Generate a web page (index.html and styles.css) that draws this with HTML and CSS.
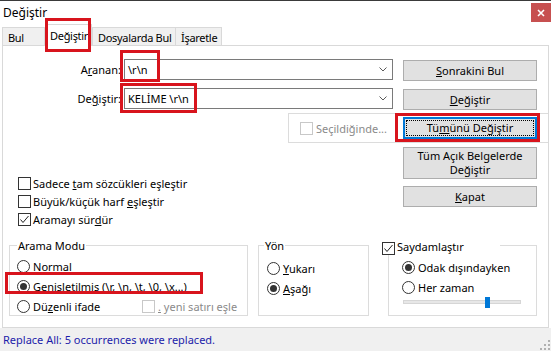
FILE: index.html
```html
<!DOCTYPE html>
<html lang="tr">
<head>
<meta charset="utf-8">
<title>Değiştir</title>
<link rel="stylesheet" href="styles.css">
</head>
<body>
<div class="window">
  <div class="titlebar">
    <span class="title">Değiştir</span>
    <span class="close"><svg width="8" height="8" viewBox="0 0 8 8"><path d="M1 1L7 7M7 1L1 7" stroke="#fff" stroke-width="1.6" fill="none"/></svg></span>
  </div>

  <div class="tabs">
    <div class="tab tab-bul">Bul</div>
    <div class="tab tab-deg active">Değiştir</div>
    <div class="tab tab-dos">Dosyalarda Bul</div>
    <div class="tab tab-isa">İşaretle</div>
  </div>

  <div class="panel">
    <div class="row row-find">
      <div class="lbl">A<u>r</u>anan:</div>
      <div class="combo"><span>\r\n</span><svg class="chev" width="8" height="5" viewBox="0 0 8 5"><path d="M0.5 0.5L4 4L7.5 0.5" stroke="#5a5a5a" fill="none"/></svg></div>
      <div class="btn"><span><u>S</u>onrakini Bul</span></div>
    </div>
    <div class="row row-rep">
      <div class="lbl">De<u>ğ</u>iştir:</div>
      <div class="combo"><span>KELİME \r\n</span><svg class="chev" width="8" height="5" viewBox="0 0 8 5"><path d="M0.5 0.5L4 4L7.5 0.5" stroke="#5a5a5a" fill="none"/></svg></div>
      <div class="btn"><span><u>D</u>eğiştir</span></div>
    </div>

    <div class="selbox">
      <div class="selchk"><span class="cb dis"></span><span>Seçildiğinde...</span></div>
      <div class="btn focus"><span>Tü<u>m</u>ünü Değiştir</span></div>
    </div>

    <div class="mid">
      <div class="checks">
        <div class="chk-row"><span class="cb"></span><span>Sadece <u>t</u>am sözcükleri eşleştir</span></div>
        <div class="chk-row"><span class="cb"></span><span>Büyük/küçük harf <u>e</u>şleştir</span></div>
        <div class="chk-row"><span class="cb"><svg width="11" height="11" viewBox="0 0 11 11"><path d="M1.5 5.5L4 8.5L9.5 2" stroke="#222" fill="none"/></svg></span><span>Aramayı sür<u>d</u>ür</span></div>
      </div>
      <div class="rbtns">
        <div class="btn tall"><span>Tüm Açık Belgelerde<br>Değiştir</span></div>
        <div class="btn kapat"><span><u>K</u>apat</span></div>
      </div>
    </div>

    <div class="groups">
      <fieldset class="grp g-mode">
        <legend>Arama Modu</legend>
        <div class="gbody">
          <div class="rad-row"><span class="rd"></span><span><u>N</u>ormal</span></div>
          <div class="rad-row"><span class="rd on"></span><span><u>G</u>enişletilmiş (\r, \n, \t, \0, \x...)</span></div>
          <div class="rad-row"><div class="rad-main"><span class="rd"></span><span>Dü<u>z</u>enli ifade</span></div><span class="cb dis"></span><span class="distxt"><u>.</u> yeni satırı eşle</span></div>
        </div>
      </fieldset>
      <fieldset class="grp g-dir">
        <legend>Yön</legend>
        <div class="gbody">
          <div class="rad-row"><span class="rd"></span><span><u>Y</u>ukarı</span></div>
          <div class="rad-row"><span class="rd on"></span><span><u>A</u>şağı</span></div>
        </div>
      </fieldset>
      <fieldset class="grp g-tr">
        <legend><span class="cb"><svg width="11" height="11" viewBox="0 0 11 11"><path d="M1.5 5.5L4 8.5L9.5 2" stroke="#222" fill="none"/></svg></span><span class="ltxt">Saydamlaştır</span></legend>
        <div class="gbody">
          <div class="rad-row"><span class="rd on"></span><span>Odak dışındayken</span></div>
          <div class="rad-row"><span class="rd"></span><span>Her zaman</span></div>
          <div class="slider"><span class="track"></span><span class="thumb"></span></div>
        </div>
      </fieldset>
    </div>
  </div>

  <div class="status">
    <span>Replace All: 5 occurrences were replaced.</span>
    <svg class="grip" width="10" height="10" viewBox="0 0 10 10"><g fill="#b0b0b0"><rect x="8" y="0" width="2" height="2"/><rect x="4" y="4" width="2" height="2"/><rect x="8" y="4" width="2" height="2"/><rect x="0" y="8" width="2" height="2"/><rect x="4" y="8" width="2" height="2"/><rect x="8" y="8" width="2" height="2"/></g></svg>
  </div>

  <div class="mark m-tab"></div>
  <div class="mark m-find"></div>
  <div class="mark m-rep"></div>
  <div class="mark m-all"></div>
  <div class="mark m-ext"></div>
</div>
</body>
</html>
```
FILE: styles.css
```css
* { box-sizing: border-box; }
html, body { margin: 0; padding: 0; }
body {
  width: 551px; height: 351px; overflow: hidden; background: #fff;
  font-family: "Noto Sans", "Open Sans", sans-serif; font-size: 11px; color: #000;
}
u { text-underline-offset: 1px; }

.window { position: relative; width: 551px; height: 351px; display: flex; flex-direction: column; background: #fff; }

/* title bar */
.titlebar { height: 24px; flex: none; border-top: 1px solid #3a3a3a; display: flex; justify-content: space-between; align-items: flex-start; }
.title { font-size: 12px; line-height: 16px; margin: 4px 0 0 3px; }
.close { width: 20px; height: 19px; margin-top: 2px; background: #c75050; display: flex; align-items: center; justify-content: center; }

/* tabs */
.tabs { height: 21px; flex: none; display: flex; align-items: flex-end; padding-left: 2px; position: relative; z-index: 1; }
.tab { height: 18px; border: 1px solid #d9d9d9; border-bottom: none; background: #f0f0f0; padding: 2px 0 0 5px; line-height: 15px; white-space: nowrap; letter-spacing: -0.3px; }
.tab-bul { width: 43px; }
.tab-deg { width: 47px; }
.tab-dos { width: 84px; }
.tab-isa { width: 46px; border-left: none; }
.tab.active { height: 22px; background: #fff; margin-bottom: -1px; padding: 2px 0 0 4px; line-height: 17px; }

/* panel */
.panel { flex: none; margin-left: 2px; width: 547px; height: 283px; border: 1px solid #d9d9d9; background: #fff; }

.row { display: flex; align-items: flex-start; }
.row-find { margin-top: 13px; }
.row-rep { margin-top: 7px; }
.lbl { width: 118px; margin-right: 3px; text-align: right; line-height: 21px; white-space: nowrap; }
.combo { width: 269px; height: 21px; margin-right: 10px; border: 1px solid #7a7a7a; background: #fff; display: flex; align-items: center; justify-content: space-between; padding: 0 5px 0 3px; white-space: nowrap; }
.chev { flex: none; }

.btn { width: 134px; height: 21px; margin-top: 1px; border: 1px solid #adadad; background: #e1e1e1; display: flex; align-items: center; justify-content: center; text-align: center; line-height: 14px; white-space: nowrap; flex: none; }
.btn.focus { height: 22px; margin-top: 0; border: 2px solid #0078d7; position: relative; }
.btn.focus::before { content: ""; position: absolute; left: 1px; top: 1px; right: 1px; bottom: 1px; border: 1px dotted #000; }

/* selection box */
.selbox { margin: 3px 0 0 285px; height: 30px; border: 1px solid #dcdcdc; border-right: none; display: flex; align-items: center; }
.selchk { width: 114px; padding-left: 11px; display: flex; align-items: center; color: #8a8a8a; white-space: nowrap; }
.selchk .cb { margin: 0 3px 0 0; }

/* checkboxes / radios */
.cb { width: 13px; height: 13px; border: 1px solid #333; background: #fff; flex: none; display: block; }
.cb svg { display: block; }
.cb.dis { border-color: #c8c8c8; }
.rd { width: 13px; height: 13px; border: 1px solid #333; border-radius: 50%; background: #fff; flex: none; display: flex; align-items: center; justify-content: center; }
.rd.on::after { content: ""; width: 7px; height: 7px; border-radius: 50%; background: #333; }

.mid { display: flex; }
.checks { width: 400px; padding: 32px 0 0 15px; }
.chk-row { display: flex; align-items: flex-start; height: 18px; line-height: 18px; white-space: nowrap; }
.chk-row .cb { margin: 2px 2px 0 0; }
.rbtns { width: 134px; display: flex; flex-direction: column; }
.rbtns .btn.tall { height: 32px; margin-top: 4px; white-space: normal; }
.rbtns .btn.kapat { margin-top: 7px; }

/* group boxes */
.groups { display: flex; align-items: flex-start; margin-top: 7px; padding-left: 6px; }
.grp { margin: 0; padding: 0; border: 1px solid #dcdcdc; height: 80px; min-width: 0; }
.grp legend { padding: 0 1px; height: 19px; line-height: 19px; white-space: nowrap; }
.g-mode { width: 239px; }
.g-mode legend { margin-left: 7px; }
.g-dir { width: 111px; margin-left: 10px; }
.g-dir legend { margin-left: 5px; }
.g-tr { width: 149px; margin-left: 19px; }
.g-tr legend { margin-left: -7px; width: 118px; padding: 0; background: #fff; display: flex; align-items: flex-start; }
.g-tr legend .cb { margin: 6px 2px 0 0; }
.g-tr .ltxt { line-height: 15px; margin-top: 3px; }

.gbody { display: flex; flex-direction: column; }
.g-mode .gbody { padding: 2px 0 0 7px; }
.g-dir .gbody { padding: 4px 0 0 8px; }
.g-tr .gbody { padding: 3px 0 0 13px; }
.rad-row { display: flex; align-items: flex-start; height: 20px; line-height: 20px; white-space: nowrap; }
.rad-row .rd { margin: 3px 3px 0 0; }
.rad-main { width: 125px; display: flex; align-items: flex-start; }
.rad-row > .cb { margin: 3px 3px 0 0; }
.distxt { color: #8a8a8a; }

.slider { position: relative; width: 118px; height: 11px; margin: -1px 0 0 1px; }
.track { position: absolute; left: 0; right: 0; top: 3px; height: 4px; background: #e7e7e7; border: 1px solid #d6d6d6; }
.thumb { position: absolute; left: 82px; top: 0; width: 5px; height: 11px; background: #0078d7; }

/* status bar */
.status { flex: 1; background: #f0f0f0; display: flex; align-items: center; padding-left: 3px; color: #1c1caa; position: relative; white-space: nowrap; }
.grip { position: absolute; right: 1px; bottom: 1px; }

/* red annotation rectangles */
.mark { position: absolute; border: 3px solid #d8141d; pointer-events: none; z-index: 5; }
.m-tab { left: 45px; top: 18px; width: 46px; height: 34px; }
.m-find { left: 120px; top: 50px; width: 40px; height: 32px; }
.m-rep { left: 120px; top: 83px; width: 77px; height: 30px; }
.m-all { left: 395px; top: 113px; width: 145px; height: 29px; }
.m-ext { left: 5px; top: 272px; width: 198px; height: 22px; }
```
